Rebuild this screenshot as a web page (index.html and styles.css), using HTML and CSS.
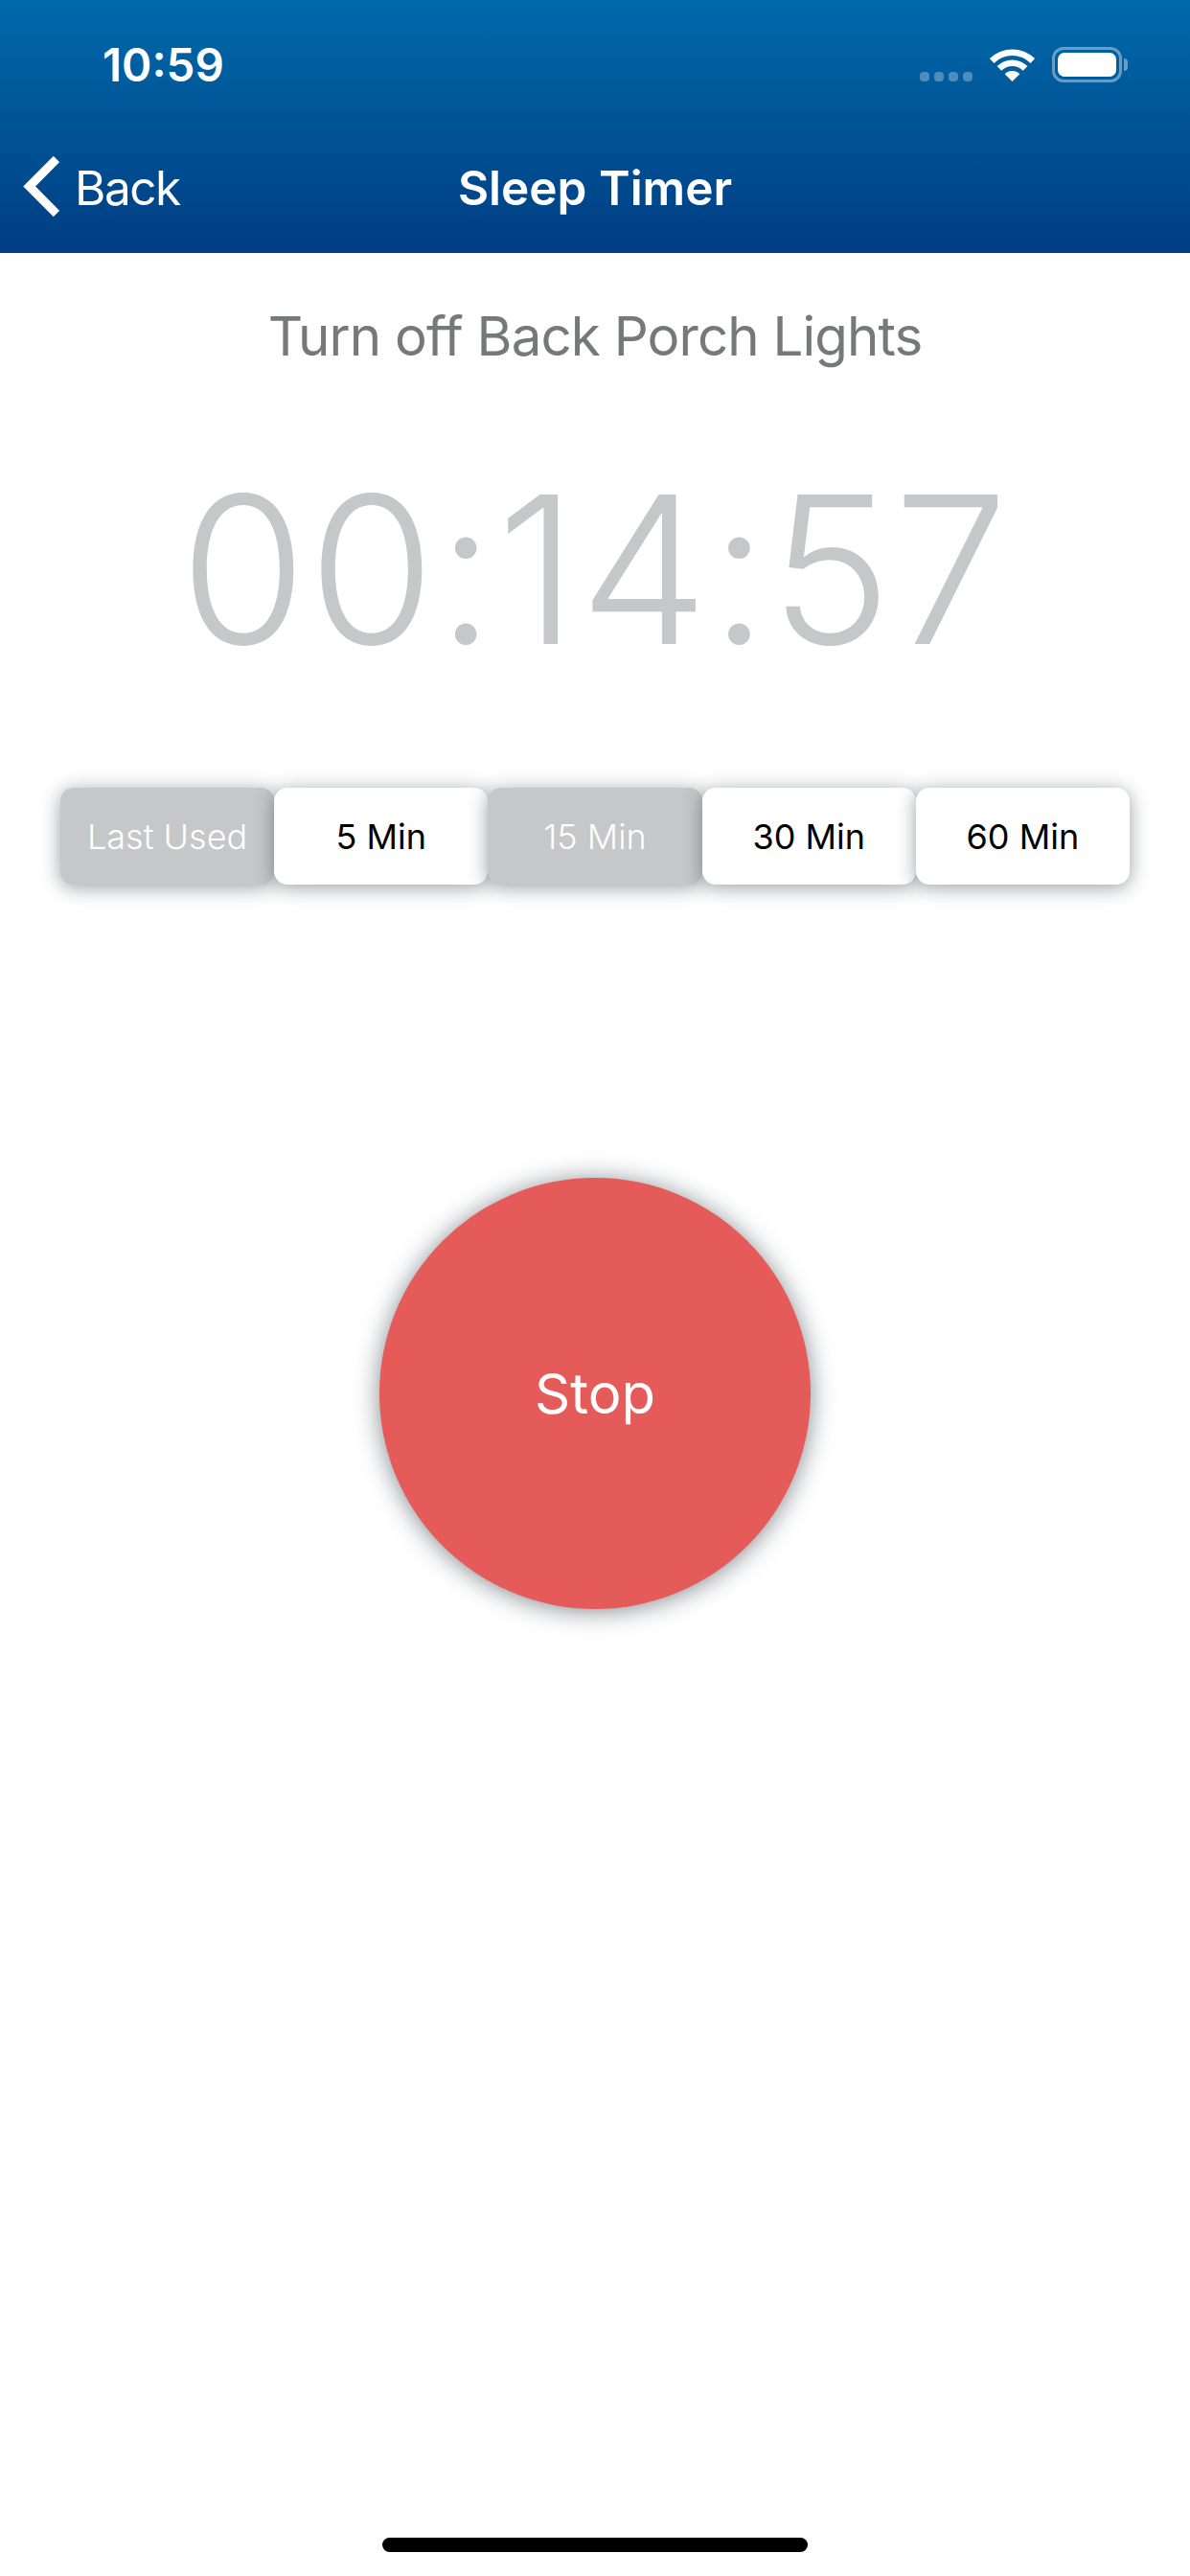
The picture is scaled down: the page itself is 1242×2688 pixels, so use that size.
FILE: index.html
```html
<!DOCTYPE html>
<html lang="en">
<head>
    <meta charset="UTF-8">
    <meta name="viewport" content="width=device-width, initial-scale=1.0">
    <title>Sleep Timer</title>
    <link rel="stylesheet" href="styles.css">
</head>
<body>

    <!-- Status bar and nav bar share one gradient -->
    <header class="top-bar">
        <div class="status-bar">
            <span class="clock">10:59</span>
            <div class="status-icons">
                <div class="signal">
                    <span></span><span></span><span></span><span></span>
                </div>
                <svg class="wifi" width="49" height="34" viewBox="0 0 49 34">
                    <path d="M0.9 10A34 34 0 0 1 48.1 10L43.6 14.9A27 27 0 0 0 5.4 14.9Z"/>
                    <path d="M8.6 18.1A22.5 22.5 0 0 1 40.4 18.1L35.8 22.7A16 16 0 0 0 13.2 22.7Z"/>
                    <path d="M16.7 26.2A11 11 0 0 1 32.3 26.2L24.5 34Z"/>
                </svg>
                <div class="battery">
                    <div class="battery-level"></div>
                </div>
                <div class="battery-nub"></div>
            </div>
        </div>
        <nav class="nav-bar">
            <div class="back">
                <svg class="back-icon" width="38" height="63" viewBox="0 0 38 63">
                    <polyline points="35,3 6.6,31.5 35,60"/>
                </svg>
                <span class="back-label">Back</span>
            </div>
            <h1>Sleep Timer</h1>
        </nav>
    </header>

    <main>
        <h2 class="scene-name">Turn off Back Porch Lights</h2>
        <div class="countdown">00:14:57</div>

        <!-- Preset durations -->
        <div class="presets">
            <div class="preset disabled">Last Used</div>
            <div class="preset">5 Min</div>
            <div class="preset disabled">15 Min</div>
            <div class="preset">30 Min</div>
            <div class="preset">60 Min</div>
        </div>

        <div class="stop-button">Stop</div>
    </main>

    <div class="home-indicator"></div>

</body>
</html>
```

FILE: styles.css
```css
/* General page layout */
html, body {
    height: 100%;
}

body {
    font-family: 'Inter', 'Liberation Sans', sans-serif;
    background-color: #fff;
    margin: 0;
    padding: 0;
    width: 1242px;
    height: 2688px;
    overflow: hidden;
    display: flex;
    flex-direction: column;
}

/* Top bar */
.top-bar {
    height: 264px;
    flex-shrink: 0;
    background: linear-gradient(180deg, #006aaa 0%, #003d83 100%);
    color: white;
}

.status-bar {
    height: 134px;
    box-sizing: border-box;
    padding: 43px 65px 0 107px;
    display: flex;
    justify-content: space-between;
    align-items: flex-start;
}

.clock {
    font-size: 47.5px;
    font-weight: 600;
    line-height: 50px;
}

.status-icons {
    display: flex;
    align-items: flex-start;
    margin-top: 6px;
}

.signal {
    display: flex;
    gap: 5px;
    margin: 26px 17px 0 0;
}

.signal span {
    width: 10px;
    height: 10px;
    border-radius: 4px;
    background-color: rgba(255, 255, 255, 0.3);
}

.wifi {
    margin: 2px 17px 0 0;
    fill: white;
}

.battery {
    width: 73px;
    height: 37px;
    box-sizing: border-box;
    border: 3px solid rgba(255, 255, 255, 0.4);
    border-radius: 12px;
    padding: 3px;
}

.battery-level {
    height: 100%;
    background-color: white;
    border-radius: 7px;
}

.battery-nub {
    width: 4px;
    height: 13px;
    margin: 12px 0 0 2px;
    background-color: rgba(255, 255, 255, 0.4);
    border-radius: 0 7px 7px 0;
}

.nav-bar {
    position: relative;
    display: flex;
    justify-content: center;
    align-items: center;
    height: 64px;
    margin-top: 30px;
}

h1 {
    margin: 0;
    font-size: 49.5px;
    font-weight: 600;
}

.back {
    position: absolute;
    left: 24px;
    top: -1px;
    display: flex;
    align-items: center;
    gap: 16px;
    font-size: 49.5px;
    letter-spacing: -1.5px;
    height: 63px;
}

.back-label {
    margin-top: 2px;
}

.back-icon {
    fill: none;
    stroke: white;
    stroke-width: 9;
}

/* Main content */
main {
    flex: 1;
    display: flex;
    flex-direction: column;
    align-items: center;
}

.scene-name {
    margin: 54px 0 0;
    font-size: 56.5px;
    font-weight: 400;
    line-height: 66px;
    letter-spacing: -0.95px;
    color: #77787b;
}

.countdown {
    margin-top: 79px;
    font-size: 214px;
    font-weight: 280;
    line-height: 264px;
    letter-spacing: 2px;
    color: #c6c7c9;
}

.presets {
    display: grid;
    grid-template-columns: repeat(5, 1fr);
    width: 1116px;
    height: 101px;
    margin-top: 95px;
}

.preset {
    display: flex;
    justify-content: center;
    align-items: center;
    background-color: #fff;
    border-radius: 14px;
    box-shadow: 0 3px 20px rgba(30, 40, 50, 0.45);
    font-size: 36px;
    color: #000;
}

.preset.disabled {
    background-color: #c6c7c9;
    color: #fff;
    font-weight: 300;
}

.stop-button {
    display: flex;
    justify-content: center;
    align-items: center;
    width: 450px;
    height: 450px;
    margin-top: 306px;
    border-radius: 50%;
    background-color: #e55b59;
    box-shadow: 0 2px 26px rgba(30, 40, 50, 0.55);
    color: white;
    font-size: 58px;
}

/* Home indicator */
.home-indicator {
    flex-shrink: 0;
    width: 444px;
    height: 15px;
    margin: 0 auto 25px;
    background-color: #000;
    border-radius: 8px;
}
```
